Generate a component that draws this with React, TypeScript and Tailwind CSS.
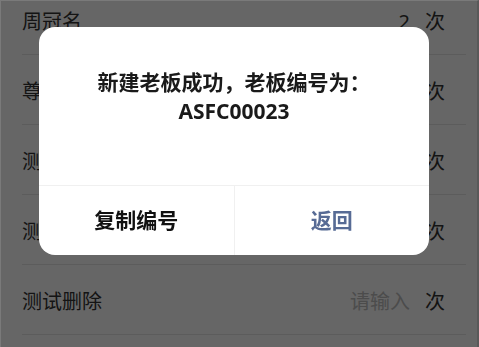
const ROWS = [
  { id: 'champion', label: '周冠名', value: '2', placeholder: '' },
  { id: 'vip', label: '尊享名', value: '', placeholder: '' },
  { id: 'test1', label: '测试一', value: '', placeholder: '' },
  { id: 'test2', label: '测试二', value: '', placeholder: '' },
  { id: 'test-del', label: '测试删除', value: '', placeholder: '请输入' },
];

function CountRow({ label, value, placeholder }: { label: string; value: string; placeholder: string }) {
  return (
    <div className="flex h-[70px] items-center border-b border-[#e6e6e6] pr-[21px] pt-[5px] text-[20px] text-[#333]">
      <span className="flex-1">{label}</span>
      {value ? (
        <span className="text-right">{value}</span>
      ) : (
        <span className="text-right text-[#bdbdbd]">{placeholder}</span>
      )}
      <span className="ml-[15px]">次</span>
    </div>
  );
}

export default function App() {
  return (
    <div
      className="relative h-[347px] w-[479px] overflow-hidden bg-white"
      style={{ fontFamily: '"Noto Sans", "Noto Sans CJK SC", sans-serif' }}
    >
      <div className="-mt-[15px] ml-[22px] mr-[13px]">
        {ROWS.map((row) => (
          <CountRow key={row.id} label={row.label} value={row.value} placeholder={row.placeholder} />
        ))}
      </div>

      <div className="fixed inset-0 border-l border-t border-r-2 border-l-[#7a7a7a] border-t-[#7a7a7a] border-r-[#595959] bg-black/60">
        <div className="pl-[38px] pt-[26px]">
          <div className="w-[390px] overflow-hidden rounded-[16px] bg-white">
            <div className="flex h-[158px] flex-col items-center pt-[41px] text-center text-[21px] font-bold leading-[29px] text-[#1a1a1a]">
              <span>新建老板成功，老板编号为：</span>
              <span>ASFC00023</span>
            </div>
            <div className="flex h-[70px] border-t border-[#f0f0f0] text-[21px] font-bold">
              <button className="flex flex-1 items-center justify-center border-r border-[#f0f0f0] text-[#111]">
                复制编号
              </button>
              <button className="flex flex-1 items-center justify-center text-[#576b95]">
                返回
              </button>
            </div>
          </div>
        </div>
      </div>
    </div>
  );
}
